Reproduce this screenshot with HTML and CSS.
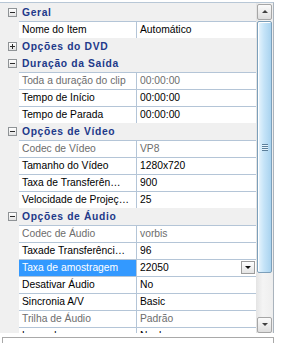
FILE: index.html
```html
<!DOCTYPE html>
<html lang="pt">
<head>
  <meta charset="UTF-8">
  <title>Propriedades</title>
  <link rel="stylesheet" href="styles.css">
</head>
<body>
  <div class="panel">
    <div class="rows">
      <div class="cat"><span class="gutter"><span class="toggle minus"></span></span><span class="cat-label">Geral</span></div>
      <div class="prop"><span class="gutter"></span><span class="cells"><span class="name">Nome do Item</span><span class="value">Automático</span></span></div>
      <div class="cat"><span class="gutter"><span class="toggle plus"></span></span><span class="cat-label">Opções do DVD</span></div>
      <div class="cat"><span class="gutter"><span class="toggle minus"></span></span><span class="cat-label">Duração da Saída</span></div>
      <div class="prop readonly"><span class="gutter"></span><span class="cells"><span class="name">Toda a duração do clip</span><span class="value">00:00:00</span></span></div>
      <div class="prop"><span class="gutter"></span><span class="cells"><span class="name">Tempo de Início</span><span class="value">00:00:00</span></span></div>
      <div class="prop"><span class="gutter"></span><span class="cells"><span class="name">Tempo de Parada</span><span class="value">00:00:00</span></span></div>
      <div class="cat"><span class="gutter"><span class="toggle minus"></span></span><span class="cat-label">Opções de Vídeo</span></div>
      <div class="prop readonly"><span class="gutter"></span><span class="cells"><span class="name">Codec de Vídeo</span><span class="value">VP8</span></span></div>
      <div class="prop"><span class="gutter"></span><span class="cells"><span class="name">Tamanho do Vídeo</span><span class="value">1280x720</span></span></div>
      <div class="prop"><span class="gutter"></span><span class="cells"><span class="name">Taxa de Transferên…</span><span class="value">900</span></span></div>
      <div class="prop"><span class="gutter"></span><span class="cells"><span class="name">Velocidade de Projeç…</span><span class="value">25</span></span></div>
      <div class="cat"><span class="gutter"><span class="toggle minus"></span></span><span class="cat-label">Opções de Áudio</span></div>
      <div class="prop readonly"><span class="gutter"></span><span class="cells"><span class="name">Codec de Áudio</span><span class="value">vorbis</span></span></div>
      <div class="prop"><span class="gutter"></span><span class="cells"><span class="name">Taxade Transferênci…</span><span class="value">96</span></span></div>
      <div class="prop selected"><span class="gutter"></span><span class="cells"><span class="name">Taxa de amostragem</span><span class="value">22050<span class="drop"></span></span></span></div>
      <div class="prop"><span class="gutter"></span><span class="cells"><span class="name">Desativar Áudio</span><span class="value">No</span></span></div>
      <div class="prop"><span class="gutter"></span><span class="cells"><span class="name">Sincronia A/V</span><span class="value">Basic</span></span></div>
      <div class="prop readonly"><span class="gutter"></span><span class="cells"><span class="name">Trilha de Áudio</span><span class="value">Padrão</span></span></div>
      <div class="prop"><span class="gutter"></span><span class="cells"><span class="name">Legendas</span><span class="value">Nenhuma</span></span></div>
    </div>

    <!-- vertical scrollbar -->
    <div class="scrollbar">
      <div class="arrow up"></div>
      <div class="thumb"><span class="grip"></span></div>
      <div class="arrow down"></div>
    </div>
  </div>

  <div class="help"></div>
</body>
</html>
```

FILE: styles.css
```css
/* General Styles */
body {
  margin: 0;
  padding: 0;
  background-color: #ffffff;
  font-family: "Liberation Sans", Arial, sans-serif;
  font-size: 10.3px;
  color: #000;
}

.panel {
  display: flex;
  width: 273px;
  height: 330px;
  margin-top: 2px;
  border-top: 1px solid #b8c7d6;
  border-right: 1px solid #a9b3bd;
}

.rows {
  width: 256px;
  height: 330px;
  padding-top: 1px;
  box-sizing: border-box;
  overflow: hidden;
  background-color: #f0f0f0;
}

/* Rows */
.cat,
.prop {
  display: flex;
  height: 17px;
}

.gutter {
  display: block;
  flex: 0 0 19px;
  background-color: #f0f0f0;
}

.cat-label {
  padding-left: 3px;
  line-height: 17px;
  font-weight: bold;
  letter-spacing: 0.65px;
  color: #22398a;
}

.toggle {
  display: block;
  position: relative;
  width: 7px;
  height: 7px;
  margin: 4px 0 0 8px;
  border: 1px solid #8f9396;
  background: linear-gradient(to bottom, #ffffff, #e2e2e2);
}

.toggle::before {
  content: "";
  position: absolute;
  left: 1px;
  top: 3px;
  width: 5px;
  height: 1px;
  background-color: #2b2b2b;
}

.toggle.plus::after {
  content: "";
  position: absolute;
  left: 3px;
  top: 1px;
  width: 1px;
  height: 5px;
  background-color: #2b2b2b;
}

.cells {
  display: flex;
  flex: 1;
  border-top: 1px solid #b4c5d7;
  background-color: #ffffff;
}

.name {
  width: 114px;
  flex: 0 0 114px;
  padding-left: 3px;
  line-height: 16px;
  white-space: nowrap;
  overflow: hidden;
  border-right: 1px solid #b4c5d7;
}

.value {
  position: relative;
  flex: 1;
  padding-left: 3px;
  line-height: 16px;
  white-space: nowrap;
  overflow: hidden;
}

.readonly .name,
.readonly .value {
  color: #6d6d6d;
}

.selected .name {
  background-color: #3399ff;
  color: #ffffff;
}

.drop {
  position: absolute;
  right: 1px;
  top: 1px;
  width: 14px;
  height: 13px;
  border: 1px solid #9c9c9c;
  background: linear-gradient(to bottom, #ffffff, #e4e4e4);
  box-sizing: border-box;
}

.drop::after {
  content: "";
  position: absolute;
  left: 3px;
  top: 4px;
  border-left: 3px solid transparent;
  border-right: 3px solid transparent;
  border-top: 3px solid #111;
}

/* Scrollbar */
.scrollbar {
  display: flex;
  flex-direction: column;
  width: 17px;
  height: 330px;
  background: linear-gradient(to right, #e4e4e4, #f4f4f4 40%, #eeeeee);
}

.arrow {
  position: relative;
  height: 16px;
  margin: 1px 1px 0 1px;
  border: 1px solid #a6a6a6;
  border-radius: 2px;
  background: linear-gradient(to bottom, #fbfbfb, #dedede);
  box-sizing: border-box;
}

.arrow.down {
  margin-top: auto;
  margin-bottom: 0;
}

.arrow::after {
  content: "";
  position: absolute;
  left: 4px;
  top: 5px;
  border-left: 3px solid transparent;
  border-right: 3px solid transparent;
}

.arrow.up::after {
  border-bottom: 3px solid #404040;
}

.arrow.down::after {
  border-top: 3px solid #404040;
}

.thumb {
  display: flex;
  align-items: center;
  justify-content: center;
  height: 252px;
  margin: 1px 1px 0 1px;
  border: 1px solid #7c9fba;
  border-radius: 2px;
  background: linear-gradient(to right, #e9f5fd, #c6e4f8 45%, #a9d3ef);
  box-shadow: inset 1px 1px 0 #ffffff;
  box-sizing: border-box;
}

.grip {
  width: 6px;
  height: 7px;
  background: repeating-linear-gradient(to bottom, #5b7f9b 0, #5b7f9b 1px, #e8f4fc 1px, #e8f4fc 2px);
}

/* Description box */
.help {
  height: 20px;
  margin: 4px 0 0 2px;
  width: 270px;
  border: 1px solid #a9a9a9;
  border-bottom: none;
}
```
